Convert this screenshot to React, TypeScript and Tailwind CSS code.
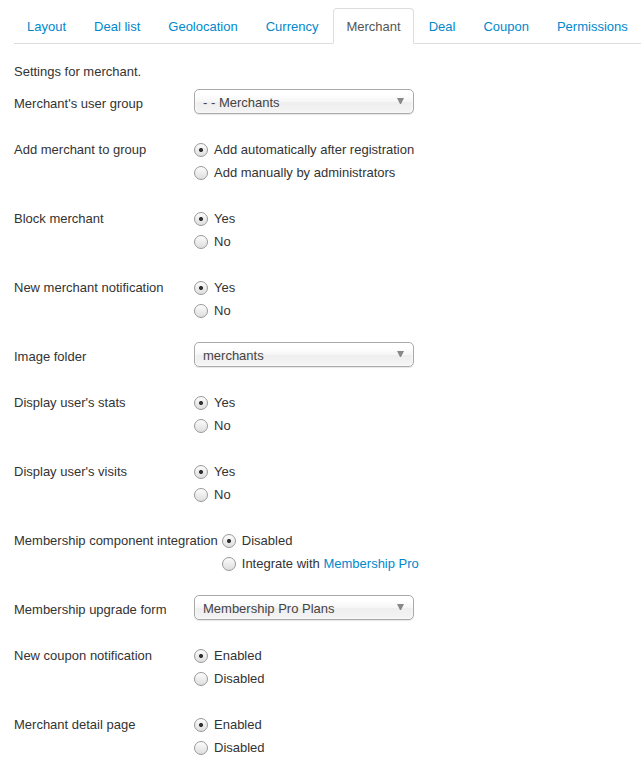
import type { ReactNode } from 'react';

const tabs = ['Layout', 'Deal list', 'Geolocation', 'Currency', 'Merchant', 'Deal', 'Coupon', 'Permissions'];
const activeTab = 'Merchant';

type Field =
  | { kind: 'select'; id: string; label: string; value: string }
  | { kind: 'radio'; id: string; label: string; options: ReactNode[] };

const fields: Field[] = [
  { kind: 'select', id: 'user-group', label: "Merchant's user group", value: '- - Merchants' },
  {
    kind: 'radio',
    id: 'add-to-group',
    label: 'Add merchant to group',
    options: ['Add automatically after registration', 'Add manually by administrators'],
  },
  { kind: 'radio', id: 'block', label: 'Block merchant', options: ['Yes', 'No'] },
  { kind: 'radio', id: 'new-merchant', label: 'New merchant notification', options: ['Yes', 'No'] },
  { kind: 'select', id: 'image-folder', label: 'Image folder', value: 'merchants' },
  { kind: 'radio', id: 'stats', label: "Display user's stats", options: ['Yes', 'No'] },
  { kind: 'radio', id: 'visits', label: "Display user's visits", options: ['Yes', 'No'] },
  {
    kind: 'radio',
    id: 'integration',
    label: 'Membership component integration',
    options: [
      'Disabled',
      <>
        Integrate with{' '}
        <a href="#membership-pro" className="text-[#0088cc] hover:underline">
          Membership Pro
        </a>
      </>,
    ],
  },
  { kind: 'select', id: 'upgrade-form', label: 'Membership upgrade form', value: 'Membership Pro Plans' },
  { kind: 'radio', id: 'new-coupon', label: 'New coupon notification', options: ['Enabled', 'Disabled'] },
  { kind: 'radio', id: 'detail-page', label: 'Merchant detail page', options: ['Enabled', 'Disabled'] },
];

const rowClass = 'flex items-start';
const labelClass = 'min-w-[180px] shrink-0 pt-[3px] pr-1 leading-[23px]';

function SelectField({ id, label, value }: { id: string; label: string; value: string }) {
  return (
    <div className={rowClass}>
      <label htmlFor={id} className={labelClass}>
        {label}
      </label>
      <div className="grid w-[220px] items-center">
        <select
          id={id}
          defaultValue={value}
          className="col-start-1 row-start-1 h-[25px] w-full appearance-none rounded-[5px] border border-[#aaa] bg-[linear-gradient(#fff_20%,#f6f6f6_50%,#eee_52%,#f4f4f4_100%)] pt-0.5 pr-6 pl-2 text-[#444] shadow-[inset_0_0_3px_#fff,0_1px_1px_rgba(0,0,0,0.1)]"
        >
          <option>{value}</option>
        </select>
        <svg
          viewBox="0 0 7 6"
          className="pointer-events-none col-start-1 row-start-1 mr-[10px] mb-0.5 h-1.5 w-[7px] justify-self-end"
          fill="#888"
          aria-hidden="true"
        >
          <path d="M0 0h7L4 6H3z" />
        </svg>
      </div>
    </div>
  );
}

function RadioField({ id, label, options }: { id: string; label: string; options: ReactNode[] }) {
  return (
    <div role="radiogroup" aria-labelledby={`${id}-label`} className={rowClass}>
      <span id={`${id}-label`} className={labelClass}>
        {label}
      </span>
      <div className="pt-[3px]">
        {options.map((option, i) => (
          <label key={i} className="flex items-center gap-1.5 leading-[23px]">
            <input
              type="radio"
              name={id}
              defaultChecked={i === 0}
              className="size-3.5 shrink-0 appearance-none rounded-full border border-[#999] bg-[linear-gradient(#fcfcfc,#dedede)] checked:bg-[radial-gradient(circle,#333_1.6px,transparent_2.4px),linear-gradient(#fcfcfc,#dedede)]"
            />
            <span>{option}</span>
          </label>
        ))}
      </div>
    </div>
  );
}

export default function App() {
  return (
    <div className="bg-white pt-2 pb-2.5 pl-3.5 font-['Liberation_Sans',Arial,sans-serif] text-[13px] leading-[18px] text-[#333]">
      <nav className="flex gap-0.5 border-b border-[#ddd] whitespace-nowrap">
        {tabs.map((tab) => (
          <a
            key={tab}
            href={`#${tab.toLowerCase().replace(' ', '-')}`}
            aria-current={tab === activeTab ? 'page' : undefined}
            className={
              tab === activeTab
                ? '-mb-px rounded-t border border-[#ddd] border-b-white bg-white px-3 pt-[9px] pb-[7px] text-[#555]'
                : '-mb-px rounded-t border border-transparent px-3 pt-[9px] pb-[7px] text-[#0088cc]'
            }
          >
            {tab}
          </a>
        ))}
      </nav>
      <form className="pt-[19px]">
        <p className="mb-2">Settings for merchant.</p>
        <div className="flex flex-col gap-5">
          {fields.map((field) =>
            field.kind === 'select' ? (
              <SelectField key={field.id} id={field.id} label={field.label} value={field.value} />
            ) : (
              <RadioField key={field.id} id={field.id} label={field.label} options={field.options} />
            ),
          )}
        </div>
      </form>
    </div>
  );
}
